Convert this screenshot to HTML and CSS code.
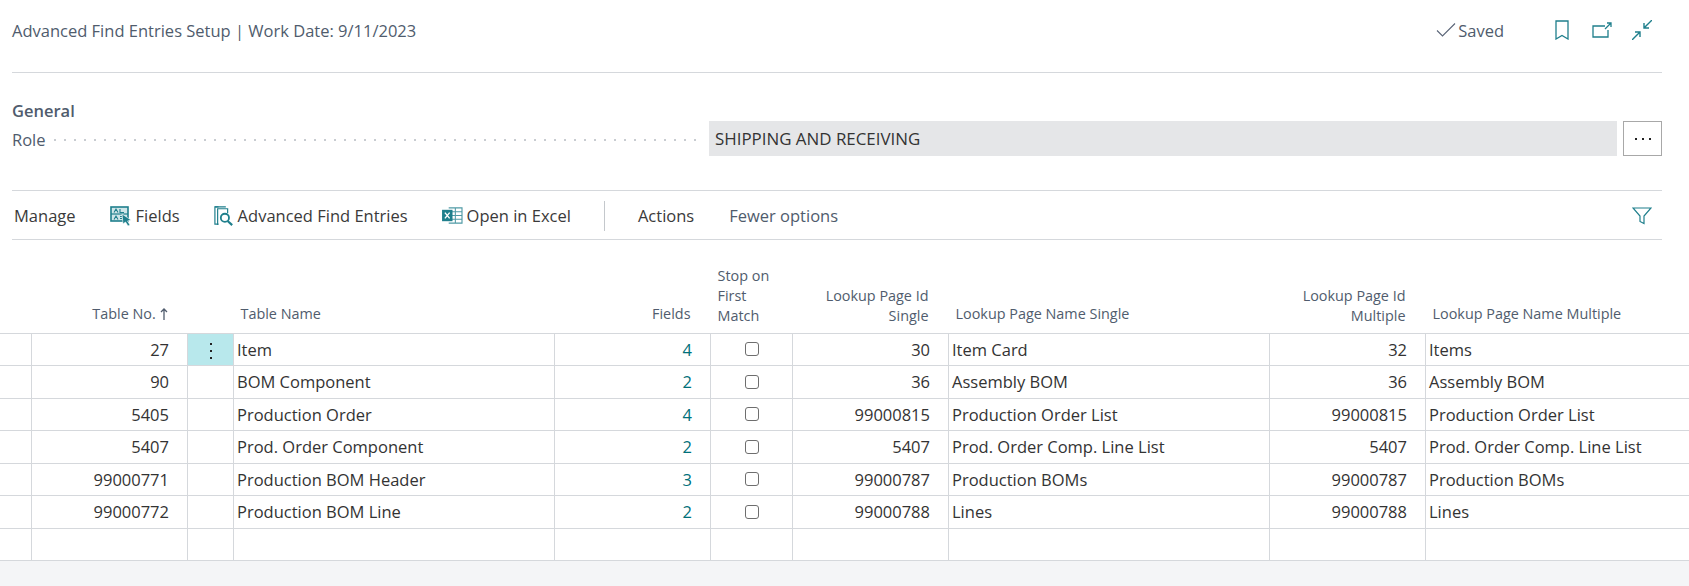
FILE: index.html
```html
<!DOCTYPE html>
<html lang="en">
<head>
<meta charset="utf-8">
<title>Advanced Find Entries Setup</title>
<link rel="stylesheet" href="styles.css">
</head>
<body>
<div class="page">
  <header class="titlebar">
    <div class="title">Advanced Find Entries Setup | Work Date: 9/11/2023</div>
    <div class="status">
      <svg class="check" viewBox="0 0 20 16" width="20" height="16"><path d="M1 8.5 L6.5 14 L19 1.5" fill="none" stroke="#5b6678" stroke-width="1.1"/></svg>
      <span>Saved</span>
    </div>
    <div class="title-icons">
      <svg viewBox="0 0 14 20" width="14" height="20"><path d="M1 1 H13 V19 L7 15.5 L1 19 Z" fill="none" stroke="#1f7f8c" stroke-width="1.3"/></svg>
      <svg viewBox="0 0 20 16" width="20" height="16"><path d="M13 4 H1 V15 H16 V8" fill="none" stroke="#1f7f8c" stroke-width="1.3"/><path d="M13 7 L19 1 M15 1 H19 V5" fill="none" stroke="#1f7f8c" stroke-width="1.3"/></svg>
      <svg class="collapse" viewBox="0 0 20 20" width="20" height="20"><path d="M20 0 L12 8 M12 3 V8 H17 M0 20 L8 12 M3 12 H8 V17" fill="none" stroke="#1f7f8c" stroke-width="1.4"/></svg>
    </div>
  </header>

  <section class="general">
    <div class="section-title">General</div>
    <div class="field">
      <span class="field-label">Role</span>
      <span class="leader"></span>
      <span class="field-value">SHIPPING AND RECEIVING</span>
      <button class="more" type="button"><i></i><i></i><i></i></button>
    </div>
  </section>

  <nav class="toolbar">
    <span class="tool tool-first">Manage</span>
    <span class="tool">
      <svg viewBox="0 0 22 20" width="22" height="20"><rect x="1" y="1" width="17" height="14" fill="#cfe6e9" stroke="#1f7f8c" stroke-width="1.6"/><path d="M1 8 H18" stroke="#1f7f8c" stroke-width="1.2"/><path d="M4 6.500 L6 3 L8 6.500 M10 3 V6.500 H14 M4 13.500 L6 10 L8 13.500 M10 10.500 H12 M10 12.500 H12" fill="none" stroke="#1f7f8c" stroke-width="1.1"/><path d="M12 8 L21 14 L17.500 15 L20 19 L18 20 L15.500 16 L13 18 Z" fill="#1f7f8c" stroke="#fff" stroke-width=".6"/></svg>
      Fields
    </span>
    <span class="tool">
      <svg viewBox="0 0 22 22" width="20" height="20"><path d="M5 1 H1 V20 H5" fill="none" stroke="#1f7f8c" stroke-width="1.3"/><path d="M1 1 H13 M4 21 V3 H15 V8" fill="none" stroke="#1f7f8c" stroke-width="1.3"/><circle cx="12" cy="13" r="4.500" fill="none" stroke="#1f7f8c" stroke-width="2"/><path d="M15 16.500 L20 21" stroke="#1f7f8c" stroke-width="2.400"/></svg>
      Advanced Find Entries
    </span>
    <span class="tool tool-excel">
      <svg viewBox="0 0 22 20" width="21" height="19"><path d="M7 2 H21 V18 H7" fill="none" stroke="#4f9aa5" stroke-width="1.2"/><path d="M14 2 V18 M7 6 H21 M7 10 H21 M7 14 H21" stroke="#4f9aa5" stroke-width="1.1"/><rect x="0" y="4" width="11" height="12" fill="#1f7f8c"/><path d="M3 7 L8 13 M8 7 L3 13" stroke="#fff" stroke-width="1.5"/></svg>
      Open in Excel
    </span>
    <span class="sep"></span>
    <span class="tool tool-actions">Actions</span>
    <span class="tool tool-muted">Fewer options</span>
    <svg class="filter" viewBox="0 0 20 18" width="20" height="18"><path d="M1 1 H19 L12 9 V16.500 L8 14.500 V9 Z" fill="none" stroke="#1f7f8c" stroke-width="1.2"/></svg>
  </nav>

  <table class="grid">
    <colgroup>
      <col class="c-mark"><col class="c-no"><col class="c-menu"><col class="c-name"><col class="c-fields"><col class="c-stop"><col class="c-id"><col class="c-pname"><col class="c-id"><col class="c-last">
    </colgroup>
    <thead>
      <tr>
        <th></th>
        <th class="num">Table No. <svg class="sort" viewBox="0 0 8 12" width="8" height="12"><path d="M4 12 V1 M1 4 L4 1 L7 4" fill="none" stroke="#505c6d" stroke-width="1.3"/></svg></th>
        <th></th>
        <th>Table Name</th>
        <th class="num">Fields</th>
        <th class="stop multi">Stop on First Match</th>
        <th class="num multi">Lookup Page Id Single</th>
        <th>Lookup Page Name Single</th>
        <th class="num multi">Lookup Page Id Multiple</th>
        <th>Lookup Page Name Multiple</th>
      </tr>
    </thead>
    <tbody>
      <tr><td></td><td class="num">27</td><td class="menu-on"><span class="dots"><i></i><i></i><i></i></span></td><td>Item</td><td class="num link">4</td><td><span class="cb"></span></td><td class="num">30</td><td>Item Card</td><td class="num">32</td><td>Items</td></tr>
      <tr><td></td><td class="num">90</td><td></td><td>BOM Component</td><td class="num link">2</td><td><span class="cb"></span></td><td class="num">36</td><td>Assembly BOM</td><td class="num">36</td><td>Assembly BOM</td></tr>
      <tr><td></td><td class="num">5405</td><td></td><td>Production Order</td><td class="num link">4</td><td><span class="cb"></span></td><td class="num">99000815</td><td>Production Order List</td><td class="num">99000815</td><td>Production Order List</td></tr>
      <tr><td></td><td class="num">5407</td><td></td><td>Prod. Order Component</td><td class="num link">2</td><td><span class="cb"></span></td><td class="num">5407</td><td>Prod. Order Comp. Line List</td><td class="num">5407</td><td>Prod. Order Comp. Line List</td></tr>
      <tr><td></td><td class="num">99000771</td><td></td><td>Production BOM Header</td><td class="num link">3</td><td><span class="cb"></span></td><td class="num">99000787</td><td>Production BOMs</td><td class="num">99000787</td><td>Production BOMs</td></tr>
      <tr><td></td><td class="num">99000772</td><td></td><td>Production BOM Line</td><td class="num link">2</td><td><span class="cb"></span></td><td class="num">99000788</td><td>Lines</td><td class="num">99000788</td><td>Lines</td></tr>
      <tr><td></td><td></td><td></td><td></td><td></td><td></td><td></td><td></td><td></td><td></td></tr>
    </tbody>
  </table>
  <div class="footer"></div>
</div>
</body>
</html>
```

FILE: styles.css
```css
* { box-sizing: border-box; }
html, body { margin: 0; height: 100%; }
body {
  font-family: "Open Sans", "Noto Sans", sans-serif;
  font-size: 16.5px;
  color: #333;
  background: #fff;
  overflow: hidden;
}
.page { display: flex; flex-direction: column; height: 586px; }

.titlebar {
  height: 73px;
  margin: 0 27px 0 12px;
  display: flex;
  align-items: center;
  padding-bottom: 12px;
  border-bottom: 1px solid #d5d8dc;
  color: #505c6d;
}
.title { flex: 1; }
.status { display: flex; align-items: center; gap: 2px; margin-right: 51px; }
.title-icons { display: flex; align-items: center; gap: 23px; padding-right: 10px; }
.collapse { margin-left: -3px; }

.general { height: 118px; margin: 0 27px 0 12px; padding-top: 27px; border-bottom: 1px solid #d5d8dc; }
.section-title { font-weight: 600; color: #505c6d; height: 21px; line-height: 22px; }
.field { display: flex; align-items: center; height: 35px; }
.field-label { color: #505c6d; width: 38px; padding-top: 1px; }
.leader {
  width: 650px;
  height: 2px;
  margin: 2px 9px 0 0;
  background-image: radial-gradient(circle, #c8ccd1 1px, transparent 1.2px);
  background-size: 10px 2px;
}
.field-value {
  flex: 1;
  height: 35px;
  line-height: 36px;
  font-size: 16.9px;
  background: #e5e6e8;
  padding-left: 6px;
  color: #333;
}
.more {
  width: 39px;
  height: 35px;
  margin-left: 6px;
  padding: 0;
  background: #fff;
  border: 1px solid #a8a8a8;
  display: flex;
  align-items: center;
  justify-content: center;
  gap: 5px;
}
.more i { width: 2px; height: 2px; background: #222; }

.toolbar {
  height: 49px;
  margin: 0 27px 0 12px;
  padding-top: 1px;
  display: flex;
  align-items: center;
  border-bottom: 1px solid #d5d8dc;
  color: #3a3a3a;
}
.tool { display: flex; align-items: center; gap: 4px; margin-right: 34px; }
.tool-first { margin-left: 2px; }
.tool-excel { margin-right: 33px; }
.tool-actions { margin-right: 35px; }
.tool-muted { color: #505c6d; margin-right: 0; }
.sep { width: 1px; height: 30px; background: #c4c8cc; margin-right: 33px; }
.filter { margin-left: auto; margin-right: 10px; }

.grid {
  width: 1689px;
  table-layout: fixed;
  border-collapse: collapse;
  flex: none;
}
.c-mark { width: 31.5px; }
.c-no { width: 156px; }
.c-menu { width: 46px; }
.c-name { width: 321px; }
.c-fields { width: 156px; }
.c-stop { width: 82px; }
.c-id { width: 156px; }
.c-pname { width: 321px; }
.c-last { width: 264px; }

.grid th {
  height: 93px;
  padding: 0 7px 8.500px 7px;
  vertical-align: bottom;
  text-align: left;
  font-size: 14.4px;
  line-height: 20px;
  font-weight: 400;
  color: #505c6d;
  border-bottom: 1px solid #d5d8dc;
}
.grid th.num { text-align: right; padding-right: 20px; }
.grid th.multi { padding-bottom: 7px; }
.grid td {
  height: 32.5px;
  padding: 0 3px;
  border: 1px solid #d5d8dc;
  border-top: 0;
  white-space: nowrap;
  overflow: hidden;
  color: #333;
}
.grid td:first-child { border-left: 0; }
.grid td:last-child { border-right: 0; }
.grid td.num { text-align: right; padding-right: 18px; }
.grid td.link { color: #00707a; }
.menu-on { background: #b8e8ec; text-align: center; }
.dots { display: inline-flex; flex-direction: column; gap: 5px; vertical-align: middle; }
.dots i { width: 2px; height: 2px; background: #222; }
.cb {
  display: block;
  width: 14px;
  height: 14px;
  margin: 0 auto;
  border: 1px solid #6e6e6e;
  border-radius: 3px;
  background: #fff;
}
.sort { vertical-align: -1px; }
.stop { white-space: normal; }
.footer { flex: 1; background: #f4f5f7; }
```
